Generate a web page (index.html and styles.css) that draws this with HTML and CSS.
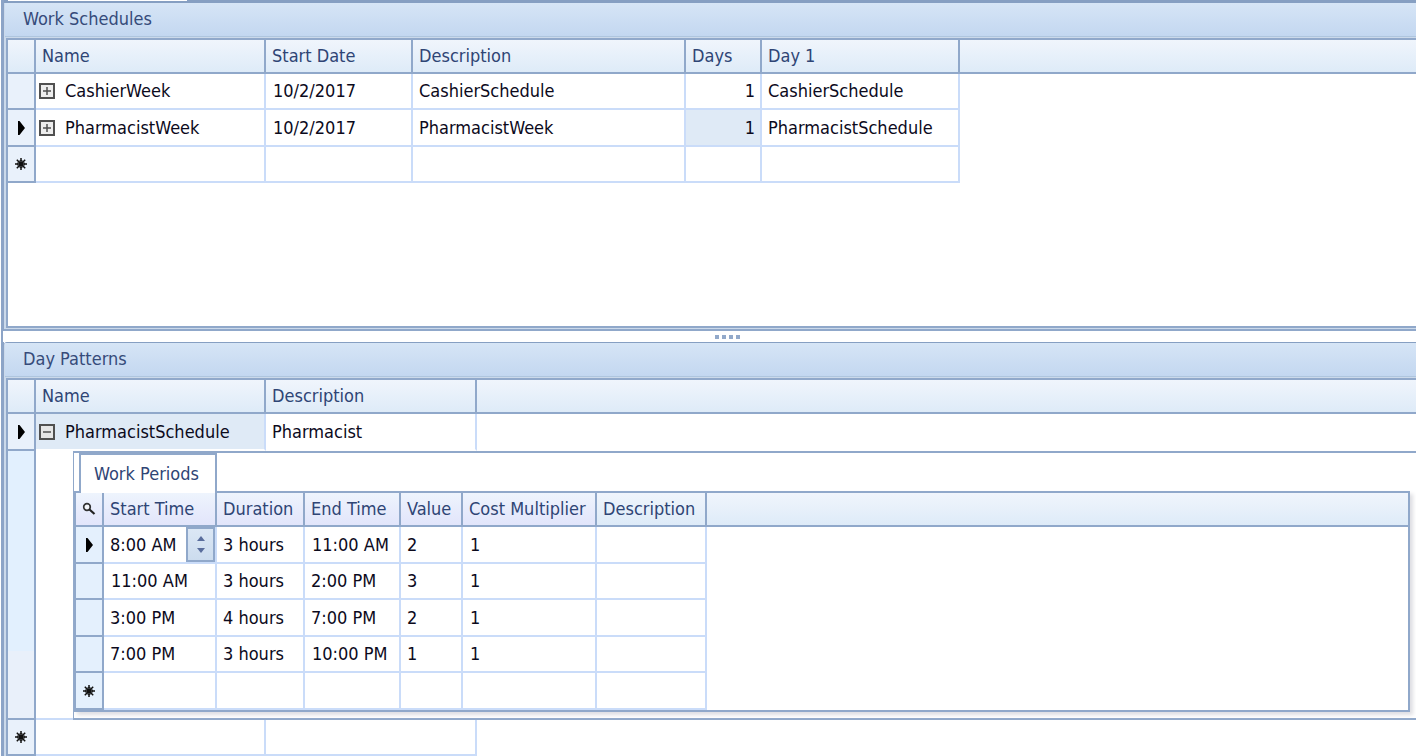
FILE: index.html
```html
<!DOCTYPE html>
<html lang="en">
<head>
<meta charset="utf-8">
<title>Work Schedules</title>
<link rel="stylesheet" href="styles.css">
</head>
<body>
<svg width="0" height="0" class="symbols" aria-hidden="true">
  <symbol id="current" viewBox="0 0 8 14"><path d="M1 0h1.500l5.500 7-5.500 7H1z"/></symbol>
  <symbol id="new" viewBox="0 0 14 14"><path d="M7 1v12M1 7h12M2.800 2.800l8.400 8.400M11.200 2.800l-8.400 8.400" stroke="#111" stroke-width="1.500"/><circle cx="7" cy="7" r="3.400" fill="none" stroke="#111" stroke-width="1"/><circle cx="7" cy="7" r="1.800" fill="#111"/></symbol>
  <symbol id="plus" viewBox="0 0 16 16"><rect x="1" y="1" width="14" height="14" fill="#ededed" stroke="#505050" stroke-width="2"/><path d="M8 4v8M4 8h8" stroke="#505050" stroke-width="1.500"/></symbol>
  <symbol id="minus" viewBox="0 0 16 16"><rect x="1" y="1" width="14" height="14" fill="#e6e6e6" stroke="#505050" stroke-width="2"/><path d="M4 8h8" stroke="#505050" stroke-width="1.500"/></symbol>
  <symbol id="search" viewBox="0 0 14 14"><circle cx="5" cy="5" r="3.300" fill="#f4f6fa" stroke="#333" stroke-width="1.700"/><path d="M7.500 7.500l5 4.500" stroke="#222" stroke-width="2.200"/></symbol>
</svg>
<main class="window">
  <div class="top-strip"><div class="top-strip-tab"></div></div>
  <section class="panel panel-schedules">
    <h2 class="panel-title">Work Schedules</h2>
    <div class="grid-box">
      <table class="grid schedules">
        <colgroup><col class="w-gutter"><col class="w-name"><col class="w-date"><col class="w-desc"><col class="w-days"><col class="w-day1"><col></colgroup>
        <thead>
          <tr><th></th><th>Name</th><th>Start Date</th><th>Description</th><th>Days</th><th>Day 1</th><th class="rest"></th></tr>
        </thead>
        <tbody>
          <tr><td class="gutter"></td><td><div class="node"><button class="toggle" aria-label="Expand CashierWeek"><svg width="16" height="16"><use href="#plus"/></svg></button>CashierWeek</div></td><td class="num">10/2/2017</td><td>CashierSchedule</td><td class="right">1</td><td>CashierSchedule</td><td class="rest"></td></tr>
          <tr><td class="gutter"><svg width="8" height="14"><use href="#current"/></svg></td><td><div class="node"><button class="toggle" aria-label="Expand PharmacistWeek"><svg width="16" height="16"><use href="#plus"/></svg></button>PharmacistWeek</div></td><td class="num">10/2/2017</td><td>PharmacistWeek</td><td class="right focused">1</td><td>PharmacistSchedule</td><td class="rest"></td></tr>
          <tr><td class="gutter"><svg width="14" height="14"><use href="#new"/></svg></td><td></td><td></td><td></td><td></td><td></td><td class="rest"></td></tr>
        </tbody>
      </table>
    </div>
  </section>
  <div class="splitter" role="separator"><i></i><i></i><i></i><i></i></div>
  <section class="panel panel-patterns">
    <h2 class="panel-title">Day Patterns</h2>
    <div class="grid-box">
      <table class="grid patterns">
        <colgroup><col class="w-gutter"><col class="w-name"><col class="w-pattern"><col></colgroup>
        <thead>
          <tr><th></th><th>Name</th><th>Description</th><th class="rest"></th></tr>
        </thead>
        <tbody>
          <tr class="tall"><td class="gutter"><svg width="8" height="14"><use href="#current"/></svg></td><td class="focused"><div class="node"><button class="toggle" aria-label="Collapse PharmacistSchedule"><svg width="16" height="16"><use href="#minus"/></svg></button>PharmacistSchedule</div></td><td class="open">Pharmacist</td><td class="rest"></td></tr>
          <tr>
            <td class="gutter gutter-detail"></td>
            <td class="detail-cell" colspan="3">
              <div class="detail">
                <div class="tabs" role="tablist"><button class="tab" role="tab" aria-selected="true">Work Periods</button></div>
                <div class="periods-box">
                  <table class="grid periods">
                    <colgroup><col class="w-gutter"><col class="w-start"><col class="w-duration"><col class="w-end"><col class="w-value"><col class="w-cost"><col class="w-note"><col></colgroup>
                    <thead>
                      <tr><th class="find"><svg width="14" height="14"><use href="#search"/></svg></th><th>Start Time</th><th>Duration</th><th>End Time</th><th>Value</th><th>Cost Multiplier</th><th class="plain">Description</th><th class="rest plain"></th></tr>
                    </thead>
                    <tbody>
                      <tr><td class="gutter"><svg width="8" height="14"><use href="#current"/></svg></td><td class="edit"><div class="editor"><input class="time" type="text" value="8:00 AM" aria-label="Start Time"><div class="spin"><button aria-label="Later"><svg width="8" height="5" viewBox="0 0 8 5"><path d="M0 5l4-5 4 5z"/></svg></button><button aria-label="Earlier"><svg width="8" height="5" viewBox="0 0 8 5"><path d="M0 0l4 5 4-5z"/></svg></button></div></div></td><td>3 hours</td><td class="num">11:00 AM</td><td>2</td><td class="num">1</td><td></td><td class="rest"></td></tr>
                      <tr><td class="gutter"></td><td class="num">11:00 AM</td><td>3 hours</td><td>2:00 PM</td><td>3</td><td class="num">1</td><td></td><td class="rest"></td></tr>
                      <tr><td class="gutter"></td><td>3:00 PM</td><td>4 hours</td><td>7:00 PM</td><td>2</td><td class="num">1</td><td></td><td class="rest"></td></tr>
                      <tr><td class="gutter"></td><td>7:00 PM</td><td>3 hours</td><td class="num">10:00 PM</td><td>1</td><td class="num">1</td><td></td><td class="rest"></td></tr>
                      <tr><td class="gutter"><svg width="14" height="14"><use href="#new"/></svg></td><td></td><td></td><td></td><td></td><td></td><td></td><td class="rest"></td></tr>
                    </tbody>
                  </table>
                </div>
              </div>
            </td>
          </tr>
          <tr><td class="gutter"><svg width="14" height="14"><use href="#new"/></svg></td><td></td><td></td><td class="rest"></td></tr>
        </tbody>
      </table>
    </div>
  </section>
</main>
</body>
</html>
```
FILE: styles.css
```css
:root {
  --dark: #90a8ca;
  --light: #cadcf9;
  --frame: #cbd9ea;
  --head: #2f4575;
  --font: "DejaVu Sans Condensed", "Noto Sans", sans-serif;
}
* { box-sizing: border-box; }
body {
  margin: 0;
  background: #fff;
  color: #0c0a1c;
  font: 18px/24px var(--font);
  overflow: hidden;
}
.symbols { position: absolute; }
.window {
  display: flex;
  flex-direction: column;
  min-height: 100vh;
  margin-left: 1px;
  border-left: 3px solid #8ca4c7;
}
.top-strip { height: 3px; padding-left: 4px; background: #869fc2; }
.top-strip-tab { width: 179px; height: 1px; background: #fff; }
.panel {
  display: flex;
  flex-direction: column;
  padding-left: 2px;
  background: var(--frame);
}
.panel-schedules { flex: 1; padding-bottom: 1px; border-bottom: 2px solid var(--dark); }
.panel-patterns { border-top: 1px solid #869fc2; border-top-left-radius: 3px; }
.panel-title {
  height: 34px;
  margin: 0 0 1px -1px;
  padding: 4px 18px;
  border-bottom: 1px solid #aec5de;
  background: linear-gradient(#d6e5f6, #c3d7f0);
  color: #364b7a;
  font-size: 18px;
  font-weight: normal;
}
.grid-box {
  flex: 1;
  border: 2px solid var(--dark);
  border-right: 0;
  background: #fff;
}
.panel-patterns .grid-box { border-bottom: 0; }
.grid { width: 100%; table-layout: fixed; border-spacing: 0; }
.w-gutter { width: 28px; }
.w-name { width: 230px; }
.w-date { width: 147px; }
.w-desc { width: 273px; }
.w-days { width: 76px; }
.w-day1 { width: 198px; }
.w-pattern { width: 211px; }
.w-start { width: 113px; }
.w-duration { width: 88px; }
.w-end { width: 96px; }
.w-value { width: 62px; }
.w-cost { width: 134px; }
.w-note { width: 110px; }
.grid th {
  height: 34px;
  padding: 0 0 0 6px;
  border-right: 2px solid var(--dark);
  border-bottom: 2px solid var(--dark);
  background: linear-gradient(#f0f5fc, #deebf8);
  color: var(--head);
  font-weight: normal;
  text-align: left;
  white-space: nowrap;
}
.grid td {
  height: 36px;
  padding: 0 5px 0 6px;
  border-right: 2px solid var(--light);
  border-bottom: 2px solid var(--light);
  white-space: nowrap;
}
.schedules tbody tr:nth-child(even) td,
.periods tbody tr:nth-child(odd) td,
.patterns .tall td { height: 37px; }
.grid .rest { border-right: 0; }
.grid td.rest { border-bottom: 0; }
.grid td.gutter {
  padding: 0;
  border-color: var(--dark);
  background: #e9f1fb;
  text-align: center;
}
.grid .gutter svg, .find svg { display: block; margin: 0 auto; }
.grid td.num { padding-left: 7px; }
.grid td.right { text-align: right; }
.grid td.focused { background: #dfeaf6; }
.patterns td.focused, .patterns td.open { border-bottom-color: #fff; }
.node { display: flex; align-items: center; gap: 10px; margin-left: -3px; }
.toggle { display: flex; padding: 0; border: 0; background: none; }
.splitter {
  display: flex;
  justify-content: center;
  gap: 3px;
  height: 11px;
  padding: 4px 0 3px 36px;
  margin-left: -1px;
  background: #fff;
}
.splitter i { width: 4px; height: 4px; background: #92a9ca; }
.grid td.gutter-detail { background: linear-gradient(#e2f0fe 75%, #e9f0fa 75%); }
.grid td.detail-cell { padding: 0 0 0 37px; border-right: 0; border-bottom: 0; background: linear-gradient(#fff, #fff) no-repeat 0 0 / 100% calc(100% - 2px) var(--light); vertical-align: top; }
.detail {
  padding-bottom: 6px;
  border: solid var(--dark);
  border-width: 2px 0 2px 1px;
  background: #fff;
}
.tabs { display: flex; height: 38px; padding-left: 5px; }
.tab {
  position: relative;
  height: 40px;
  padding: 0 16px 0 13px;
  border: 2px solid var(--dark);
  border-bottom: 0;
  background: #fff;
  color: var(--head);
  font: inherit;
}
.periods-box {
  margin-right: 6px;
  border: 2px solid var(--dark);
  background: #fff;
  box-shadow: 3px 3px 4px #dedee2;
}
.grid.periods th { background: linear-gradient(#eef4fd, #e2e5fb); }
.grid.periods th.plain { background: linear-gradient(#f0f5fc, #deebf8); }
.grid.periods th.find { padding: 0; }
.periods td.gutter { background: #e4f0fd; }
.grid td.edit { padding-right: 0; }
.editor { display: flex; align-items: center; justify-content: space-between; }
.time {
  width: 74px;
  padding: 0;
  border: 0;
  outline: 0;
  background: none;
  color: inherit;
  font: inherit;
}
.spin {
  display: flex;
  flex-direction: column;
  width: 29px;
  height: 35px;
  padding: 4px 0;
  border: 2px solid var(--dark);
  background: linear-gradient(#dbe7f5, #ccdcee);
}
.spin button {
  display: flex;
  flex: 1;
  align-items: center;
  justify-content: center;
  padding: 0;
  border: 0;
  background: none;
}
.spin svg { fill: #596d9c; }
```
